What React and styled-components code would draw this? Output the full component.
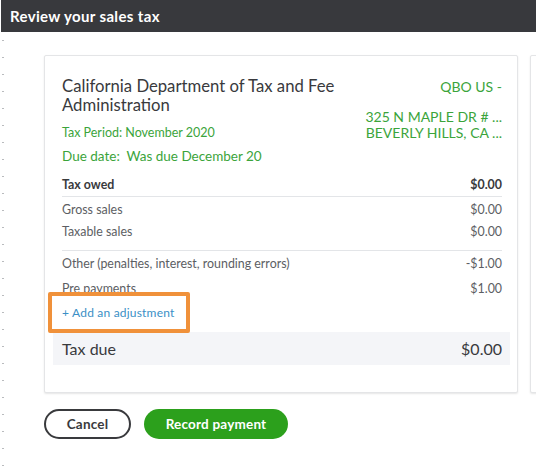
import React from "react";
import styled, { createGlobalStyle } from "styled-components";

const GlobalStyle = createGlobalStyle`
  html, body { margin: 0; padding: 0; background: #ffffff; }
  body { font-family: Lato, "Open Sans", Arial, sans-serif; color: #393a3d; }
  * { box-sizing: border-box; }
`;

const Page = styled.div`
  width: 536px;
  height: 476px;
  overflow: hidden;
  display: flex;
  flex-direction: column;
`;

const TitleBar = styled.header`
  height: 32px;
  margin-left: 1px;
  background: #38393d;
  display: flex;
  align-items: center;
  padding-left: 9px;
`;

const TitleText = styled.h1`
  margin: 0;
  font-size: 15px;
  font-weight: 700;
  color: #ffffff;
  letter-spacing: 0.35px;
`;

const Body = styled.div`
  flex: 1;
  display: flex;
`;

const Gutter = styled.div`
  width: 44px;
  flex: none;
  &::before {
    content: "";
    display: block;
    margin: 8px 0 0 2px;
    width: 2px;
    height: calc(100% - 8px);
    background: repeating-linear-gradient(
      to bottom,
      #b9bbbe 0 1px,
      transparent 1px 17px
    );
  }
`;

const Main = styled.main`
  flex: 1;
  min-width: 0;
  padding-top: 23px;
`;

const CardRow = styled.div`
  display: flex;
  gap: 12px;
`;

const Card = styled.section`
  flex: none;
  width: ${(p) => p.$w}px;
  height: 338px;
  background: #fff;
  border: 1px solid #e4e5e7;
  border-radius: 2px;
  box-shadow: 0 1px 2px rgba(0, 0, 0, 0.1);
  padding: 21px 15px 27px 17px;
  display: flex;
  flex-direction: column;
`;

const CardHead = styled.div`
  display: flex;
  justify-content: space-between;
`;

const Agency = styled.div`
  display: flex;
  flex-direction: column;
`;

const AgencyName = styled.h2`
  margin: 0;
  font-size: 16.7px;
  font-weight: 400;
  line-height: 18.5px;
  color: #393a3d;
  width: 300px;
`;

const GreenLine = styled.div`
  color: #3ba43b;
  font-size: ${(p) => p.$size || 12}px;
  line-height: 16px;
  margin-top: ${(p) => p.$gap || 0}px;
  font-weight: ${(p) => p.$weight || 400};
  white-space: nowrap;
`;

const Payee = styled.div`
  display: flex;
  flex-direction: column;
  align-items: flex-end;
  padding-top: 2px;
`;

const Group = styled.div`
  padding: ${(p) => p.$pad || "0"};
  border-bottom: ${(p) => (p.$line ? "1px solid #e3e5e8" : "none")};
`;

const Row = styled.div`
  height: ${(p) => p.$h || 22}px;
  display: flex;
  align-items: center;
  justify-content: space-between;
  font-size: 12.4px;
  font-weight: ${(p) => (p.$bold ? 700 : 400)};
  color: ${(p) => (p.$bold ? "#393a3d" : "#5c5e63")};
`;

const AdjustRow = styled.div`
  position: relative;
  height: 31px;
  display: flex;
  align-items: flex-start;
  padding-top: 4px;
`;

const AdjustLink = styled.a`
  font-size: 12px;
  color: #3a8fc6;
  text-decoration: none;
  letter-spacing: 0.2px;
  cursor: pointer;
`;

/* annotation frame drawn on top of the link */
const Highlight = styled.span`
  position: absolute;
  left: -14px;
  top: -9px;
  width: 142px;
  height: 41px;
  border: 4px solid #f0913a;
  border-radius: 2px;
  pointer-events: none;
`;

const TotalRow = styled.div`
  height: 33px;
  margin: 0 -8px 0 -9px;
  padding: 0 8px 0 9px;
  background: #f4f5f8;
  display: flex;
  align-items: center;
  justify-content: space-between;
  font-size: 16px;
  color: #393a3d;
`;

const Actions = styled.div`
  display: flex;
  gap: 13px;
  margin-top: 16px;
`;

const Button = styled.button`
  height: 30px;
  width: ${(p) => p.$w}px;
  border-radius: 15px;
  font-family: Lato, "Open Sans", Arial, sans-serif;
  font-size: 13.5px;
  font-weight: 700;
  letter-spacing: 0.2px;
  cursor: pointer;
  border: ${(p) => (p.$primary ? "none" : "2px solid #393a3d")};
  background: ${(p) => (p.$primary ? "#2ca01c" : "#ffffff")};
  color: ${(p) => (p.$primary ? "#ffffff" : "#393a3d")};
`;

export default function App() {
  return (
    <Page>
      <GlobalStyle />
      <TitleBar>
        <TitleText>Review your sales tax</TitleText>
      </TitleBar>
      <Body>
        <Gutter />
        <Main>
          <CardRow>
            <Card $w={474}>
              <CardHead>
                <Agency>
                  <AgencyName>California Department of Tax and Fee Administration</AgencyName>
                  <GreenLine $gap={11} $size={12.5}>Tax Period: November 2020</GreenLine>
                  <GreenLine $gap={7} $size={13.5}>Due date:&nbsp; Was due December 20</GreenLine>
                </Agency>
                <Payee>
                  <GreenLine $size={14}>QBO US -</GreenLine>
                  <GreenLine $size={14} $gap={14}>325 N MAPLE DR # ...</GreenLine>
                  <GreenLine $size={14}>BEVERLY HILLS, CA ...</GreenLine>
                </Payee>
              </CardHead>

              <Group $line $pad="9px 0 0">
                <Row $bold $h={23}>
                  <span>Tax owed</span>
                  <span>$0.00</span>
                </Row>
              </Group>
              <Group $line $pad="1px 0 8px">
                <Row>
                  <span>Gross sales</span>
                  <span>$0.00</span>
                </Row>
                <Row>
                  <span>Taxable sales</span>
                  <span>$0.00</span>
                </Row>
              </Group>
              <Group>
                <Row $h={24}>
                  <span>Other (penalties, interest, rounding errors)</span>
                  <span>-$1.00</span>
                </Row>
                <Row $h={26}>
                  <span>Pre payments</span>
                  <span>$1.00</span>
                </Row>
              </Group>
              <AdjustRow>
                <AdjustLink>+ Add an adjustment</AdjustLink>
                <Highlight />
              </AdjustRow>
              <TotalRow>
                <span>Tax due</span>
                <span>$0.00</span>
              </TotalRow>
            </Card>
            <Card $w={200} />
          </CardRow>
          <Actions>
            <Button $w={87}>Cancel</Button>
            <Button $w={144} $primary>Record payment</Button>
          </Actions>
        </Main>
      </Body>
    </Page>
  );
}
